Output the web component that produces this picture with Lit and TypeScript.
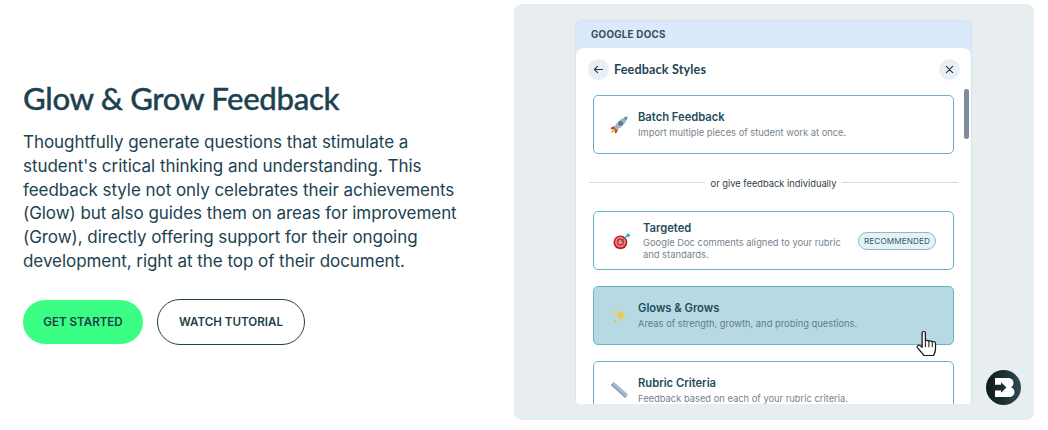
import { LitElement, html, css } from "lit";
import { customElement } from "lit/decorators.js";

const rocket = html`<svg class="ico" viewBox="0 0 20 20" width="20" height="20">
  <path d="M6 11 L2.5 12.2 L1.5 14.2 L5 14 Z" fill="#d8262f"/>
  <path d="M9 14 L7.8 17.5 L5.8 18.6 L6 15 Z" fill="#d8262f"/>
  <path d="M5.2 13.2 C3.4 13.8 2.6 15.6 1.6 18.4 C4.4 17.4 6.2 16.6 6.8 14.8 Z" fill="#f7b733"/>
  <path d="M5.2 15 L7.5 12.5 L6.6 14.9 Z" fill="#f2602d"/>
  <path d="M5.3 12.4 C7.5 7.5 12 3.2 18.6 1.6 C17.2 8 12.8 12.6 7.7 14.8 Z" fill="#9fb2c4"/>
  <path d="M14.5 2.7 C15.8 2.2 17.3 1.8 18.6 1.6 C18.3 3 17.9 4.3 17.3 5.5 Z" fill="#4a90c8"/>
  <circle cx="11.6" cy="8.4" r="2.1" fill="#334a5c"/><circle cx="11.6" cy="8.4" r="1.2" fill="#5aa7dc"/>
  <path d="M5.3 12.4 L7.7 14.8 L6.7 15.3 L4.8 13.4 Z" fill="#4f6a80"/>
</svg>`;

const target = html`<svg class="ico" viewBox="0 0 20 20" width="20" height="20">
  <circle cx="8.4" cy="11.4" r="6.9" fill="#b81f2c"/>
  <circle cx="8.4" cy="11" r="5.3" fill="#ee8c8c"/>
  <circle cx="8.4" cy="11" r="3.7" fill="#d3303a"/>
  <circle cx="8.4" cy="11" r="2" fill="#f4a9a2"/>
  <path d="M8.6 10.8 L15.4 4.6" stroke="#4d7f8e" stroke-width="1.2"/>
  <path d="M14 4.2 L16.6 1.6 L17 3.6 L19 4 L16.2 6.6 Z" fill="#3fb4cf"/>
</svg>`;

const sparkles = html`<svg class="ico" viewBox="0 0 20 20" width="20" height="20">
  <path d="M11.8 2.5 C12.4 7 13.2 8.3 17.5 9.5 C13.2 10.7 12.4 12 11.8 16.5 C11.2 12 10.4 10.7 6.2 9.5 C10.4 8.3 11.2 7 11.8 2.5 Z" fill="#f7c93a"/>
  <path d="M5 3 C5.3 5 5.7 5.5 7.6 6 C5.7 6.5 5.3 7 5 9 C4.7 7 4.3 6.5 2.4 6 C4.3 5.5 4.7 5 5 3 Z" fill="#f3c95a"/>
  <path d="M6.6 12.5 C6.8 14 7.2 14.3 8.8 14.8 C7.2 15.2 6.8 15.6 6.6 17.2 C6.4 15.6 6 15.2 4.4 14.8 C6 14.3 6.4 14 6.6 12.5 Z" fill="#f0bd3a"/>
</svg>`;

const ruler = html`<svg class="ico" viewBox="0 0 20 20" width="20" height="20">
  <path d="M4.6 1.8 L19 14.6 L16.2 18 L1.8 5 Z" fill="#a7b8d0"/>
  <path d="M1.8 5 L16.2 18 L17.2 16.8 L2.8 3.8 Z" fill="#8ea2bf"/>
</svg>`;

const cards = [
  { t: "Targeted", d: "Google Doc comments aligned to your rubric and standards.", i: target, badge: true },
  { t: "Glows & Grows", d: "Areas of strength, growth, and probing questions.", i: sparkles, sel: true },
  { t: "Rubric Criteria", d: "Feedback based on each of your rubric criteria.", i: ruler },
];

@customElement("app-root")
export class AppRoot extends LitElement {
  static styles = css`
    :host { display: block; width: 1048px; height: 430px; background: #fff; font-family: Inter, "Liberation Sans", sans-serif; color: #1c3d4d; overflow: hidden; }
    .page { display: flex; height: 430px; box-sizing: border-box; padding: 4px 14px 10px 23px; }
    .left { width: 491px; flex: none; padding-top: 77px; box-sizing: border-box; }
    h1 { margin: 0; font: 500 31.2px/34px Lato, sans-serif; letter-spacing: -0.35px; color: #1c4250; -webkit-text-stroke: 0.35px #1c4250; }
    p.lead { margin: 16px 0 0; width: 440px; font-size: 17px; line-height: 23.8px; letter-spacing: -0.05px; color: #1c4250; }
    .btns { display: flex; align-items: center; gap: 14px; margin-top: 25px; }
    .btn { display: flex; align-items: center; justify-content: center; box-sizing: border-box; border-radius: 23px; font-size: 11.6px; font-weight: 600; color: #1c3d4d; }
    .primary { width: 120px; height: 44px; background: #3bff85; }
    .ghost { width: 148px; height: 46px; border: 1px solid #1c4250; background: #fff; }
    .panel { flex: 1; position: relative; background: #e8edf0; border-radius: 8px; display: flex; justify-content: center; padding: 16px 0; box-sizing: border-box; }
    .frame { width: 397px; margin-left: -1px; background: #dbe9fd; border: 1px solid #d8e2ec; border-bottom: none; box-sizing: border-box; border-radius: 8px 8px 4px 4px; display: flex; flex-direction: column; overflow: hidden; }
    .tab { height: 27px; flex: none; padding: 0 0 1px 15px; box-sizing: border-box; display: flex; align-items: center; font-size: 9.8px; font-weight: 700; letter-spacing: 0.25px; color: #3d4a57; }
    .body { position: relative; flex: 1; min-height: 0; background: #fff; border-radius: 8px 8px 0 0; overflow: hidden; display: flex; flex-direction: column; }
    .head { flex: none; height: 42px; margin-bottom: 5px; display: flex; align-items: center; padding: 0 11px 0 12px; box-sizing: border-box; }
    .round { width: 21px; height: 21px; border-radius: 50%; background: #e8f0f5; display: flex; align-items: center; justify-content: center; flex: none; }
    .title { margin-left: 5px; flex: 1; font: 700 12.6px Lato, sans-serif; letter-spacing: 0.15px; color: #1f4552; }
    .list { padding: 0 17px; display: flex; flex-direction: column; }
    .card { box-sizing: border-box; flex: none; height: 59px; border: 1px solid #68b1cd; border-radius: 5px; display: flex; align-items: center; background: #fff; }
    .card.sel { background: #b7d9e4; }
    .card .ico { flex: none; margin: 0 9px 0 15px; }
    .txt { flex: 1; min-width: 0; }
    .t { font-size: 11.2px; font-weight: 600; line-height: 14px; color: #234c5a; }
    .d { font-size: 9.35px; line-height: 12px; margin-top: 3px; color: #76838d; }
    .card.rec .ico { margin: 0 11px 0 18px; }
    .card.rec .txt { flex: none; width: 205px; }
    .card.rec .d { margin-top: 2px; }
    .card.sel .d { color: #647a88; }
    .card.rubric { height: 70px; }
    .card.rubric .txt, .card.rubric .ico { margin-top: -12px; }
    .badge { margin-left: 10px; font-size: 8.2px; font-weight: 400; letter-spacing: 0.1px; color: #2f5a6a; background: #e6f1f6; border: 1px solid #86bdd2; border-radius: 9px; height: 18px; width: 78px; box-sizing: border-box; display: flex; align-items: center; justify-content: center; flex: none; }
    .divider { display: flex; align-items: center; gap: 6px; margin: 22px -4px 21px -4px; height: 14px; font-size: 9.3px; color: #33414c; }
    .divider i { flex: 1; height: 1px; background: #d7dadd; margin-top: -2px; }
    .gap { height: 16px; flex: none; }
    .scroll { position: absolute; left: 388px; top: 41px; width: 5px; height: 50px; border-radius: 3px; background: #7f8c9b; }
    .hand { position: absolute; left: 401px; top: 326px; }
    .logo { position: absolute; left: 472px; top: 366px; }
  `;

  private card(c: any) {
    const cls = "card" + (c.sel ? " sel" : "") + (c.badge ? " rec" : "") + (c.t === "Rubric Criteria" ? " rubric" : "");
    return html`<div class=${cls}>
      ${c.i}
      <div class="txt"><div class="t">${c.t}</div><div class="d">${c.d}</div></div>
      ${c.badge ? html`<div class="badge">RECOMMENDED</div>` : ""}
    </div>`;
  }

  render() {
    return html`<div class="page">
      <section class="left">
        <h1>Glow &amp; Grow Feedback</h1>
        <p class="lead">Thoughtfully generate questions that stimulate a student's critical thinking and understanding. This feedback style not only celebrates their achievements (Glow) but also guides them on areas for improvement (Grow), directly offering support for their ongoing development, right at the top of their document.</p>
        <div class="btns"><div class="btn primary">GET STARTED</div><div class="btn ghost">WATCH TUTORIAL</div></div>
      </section>
      <section class="panel">
        <div class="frame">
          <div class="tab">GOOGLE DOCS</div>
          <div class="body">
            <div class="head">
              <div class="round"><svg width="11" height="11" viewBox="0 0 12 12" fill="none" stroke="#2d3a44" stroke-width="1.2" stroke-linecap="round" stroke-linejoin="round"><path d="M10.5 6H1.5M5 2.5L1.5 6L5 9.500"/></svg></div>
              <div class="title">Feedback Styles</div>
              <div class="round"><svg width="9" height="9" viewBox="0 0 10 10" fill="none" stroke="#2d3a44" stroke-width="1.3" stroke-linecap="round"><path d="M1.500 1.500L8.500 8.500M8.500 1.500L1.500 8.500"/></svg></div>
            </div>
            <div class="list">
              ${this.card({ t: "Batch Feedback", d: "Import multiple pieces of student work at once.", i: rocket })}
              <div class="divider"><i></i>or give feedback individually<i></i></div>
              ${this.card(cards[0])}
              <div class="gap"></div>
              ${this.card(cards[1])}
              <div class="gap"></div>
              ${this.card(cards[2])}
            </div>
            <div class="scroll"></div>
          </div>
        </div>
        <svg class="hand" width="24" height="26" viewBox="0 0 18.500 24" preserveAspectRatio="none">
          <path d="M5.500 2.500C5.500 1 8 1 8 2.500V10.500C8.300 9.200 10.500 9.300 10.700 10.800C11 9.600 13.100 9.800 13.300 11.300C13.700 10.300 15.700 10.500 15.800 12.200V17.500C15.800 20 15 21.500 14.300 23.500H6.800C6 21.500 3.500 19 1.800 16.200C1 14.800 2.800 13.300 4 14.500L5.500 16Z" fill="#fff" stroke="#1a1a1a" stroke-width="1" stroke-linejoin="round"/>
          <path d="M8 11V16M10.700 11V16M13.300 11.500V16" stroke="#1a1a1a" stroke-width="0.800"/>
        </svg>
        <svg class="logo" width="35" height="35" viewBox="0 0 35 35">
          <defs><linearGradient id="lg" x1="0" x2="1" y1="0" y2="0"><stop offset="0" stop-color="#0c171b"/><stop offset="1" stop-color="#2f4a50"/></linearGradient></defs>
          <circle cx="17.500" cy="17.500" r="17.500" fill="url(#lg)"/>
          <path fill-rule="evenodd" fill="#fff" d="M9 8H22C25.500 8 27.500 10.300 27.500 13C27.500 15 26.500 16.400 25 17.200C27 18 28.500 19.800 28.500 22C28.500 25 26.300 27 22.800 27H9V20.500H15V22.800L20.500 17.500L15 12.300V14.700H9Z"/>
        </svg>
      </section>
    </div>`;
  }
}
